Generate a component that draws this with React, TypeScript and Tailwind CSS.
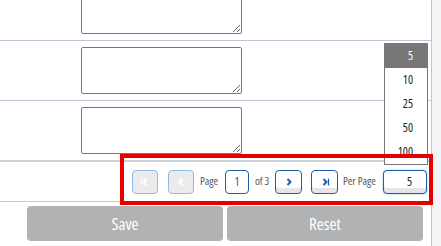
import React from 'react';

const font = { fontFamily: '"Open Sans", "Liberation Sans", sans-serif' };

const Chevron = ({ dir, bar, color }: { dir: 'l' | 'r'; bar?: boolean; color: string }) => (
  <svg width="12" height="12" viewBox="0 0 12 12">
    {dir === 'r' ? (
      <>
        <path d="M4.5 3 L7.5 6 L4.5 9" fill="none" stroke={color} strokeWidth="2" />
        {bar && <path d="M9.5 2.5 V9.5" stroke={color} strokeWidth="1.3" />}
      </>
    ) : (
      <>
        <path d="M7.5 3 L4.5 6 L7.5 9" fill="none" stroke={color} strokeWidth="2" />
        {bar && <path d="M2.5 2.5 V9.5" stroke={color} strokeWidth="1.3" />}
      </>
    )}
  </svg>
);

const PagerButton = ({ children, disabled, wide }: { children: React.ReactNode; disabled?: boolean; wide?: boolean }) => (
  <div
    className={
      (wide ? 'w-[27px] ' : 'w-[26px] ') +
      (disabled
        ? 'h-[24px] shrink-0 rounded-[4px] border border-[#8cbbe9] bg-[#ebebeb] flex items-center justify-center'
        : 'h-[24px] shrink-0 rounded-[4px] border border-[#1d5ea8] bg-white shadow-[inset_0_-5px_0_#e3e6e9] flex items-center justify-center')
    }
  >
    {children}
  </div>
);

const Row = ({ first }: { first?: boolean }) => (
  <div
    className={
      first
        ? 'h-[41px] border-b border-[#b9c9d8] overflow-hidden flex items-end pb-[6px] pl-[81px]'
        : 'h-[60px] border-b border-[#b9c9d8] flex items-center pl-[81px]'
    }
  >
    <textarea className="w-[161px] h-[47px] shrink-0 rounded-[2px] border border-[#767676] bg-white resize" />
  </div>
);

export default function App() {
  const options = ['10', '25', '50', '100'];
  return (
    <div className="relative w-[441px] h-[246px] flex bg-white overflow-hidden" style={font}>
      <div className="w-[432px] border-r border-[#b9c9d8] flex flex-col">
        <Row first />
        <Row />
        <div className="h-[61px] border-b-2 border-[#c9d1d9] flex items-center pl-[81px]">
          <textarea className="w-[161px] h-[47px] shrink-0 rounded-[2px] border border-[#767676] bg-white resize" />
        </div>
        <div className="h-[40px] border-b border-[#c3ccd5] flex items-center justify-end pr-[4px] text-[11px] font-stretch-[75%] text-[#555]">
          <PagerButton disabled>
            <Chevron dir="l" bar color="#ffffff" />
          </PagerButton>
          <div className="ml-[10px]">
            <PagerButton disabled>
              <Chevron dir="l" color="#ffffff" />
            </PagerButton>
          </div>
          <span className="ml-[6px] w-[20px] whitespace-nowrap">Page</span>
          <div className="ml-[5px] w-[24px] h-[24px] shrink-0 rounded-[4px] border border-[#1d5ea8] bg-white flex items-center justify-center text-[12px] text-[#555]">
            1
          </div>
          <span className="ml-[6px] w-[15px] whitespace-nowrap">of 3</span>
          <div className="ml-[5px]">
            <PagerButton wide>
              <Chevron dir="r" color="#1d5ea8" />
            </PagerButton>
          </div>
          <div className="ml-[9px]">
            <PagerButton wide>
              <Chevron dir="r" bar color="#1d5ea8" />
            </PagerButton>
          </div>
          <span className="ml-[5px] w-[36px] whitespace-nowrap">Per Page</span>
          <div className="ml-[4px] w-[44px] h-[24px] shrink-0 rounded-[4px] border border-[#1d5ea8] bg-white shadow-[inset_0_-5px_0_#e3e6e9,0_0_2px_#8cbbe9] flex items-center justify-end pr-[14px] text-[12px] font-stretch-[80%] text-[#222]">
            5
          </div>
        </div>
        <div className="flex gap-[4px] pl-[27px] pt-[4px]">
          <div className="w-[196px] h-[35px] rounded-[4px] bg-[#b1b2b4] text-white text-[17px] font-stretch-[78%] flex items-center justify-center">
            Save
          </div>
          <div className="w-[196px] h-[35px] rounded-[4px] bg-[#b1b2b4] text-white text-[17px] font-stretch-[78%] flex items-center justify-center">
            Reset
          </div>
        </div>
      </div>
      <div className="flex-1 bg-[#f4f5f6]" />

      {/* open per-page list */}
      <div className="absolute left-[384px] top-[43px] w-[44px] h-[122px] border border-[#777] bg-white text-[12px] font-stretch-[75%] text-[#222] overflow-hidden">
        <div className="h-[24px] bg-[#777] text-white flex items-center justify-end pr-[14px]">5</div>
        {options.map(o => (
          <div key={o} className="h-[24px] flex items-center justify-end pr-[14px]">
            {o}
          </div>
        ))}
      </div>

      {/* highlight box */}
      <div className="absolute left-[120px] top-[154px] w-[313px] h-[51px] border-4 border-[#e60000] pointer-events-none" />
    </div>
  );
}
